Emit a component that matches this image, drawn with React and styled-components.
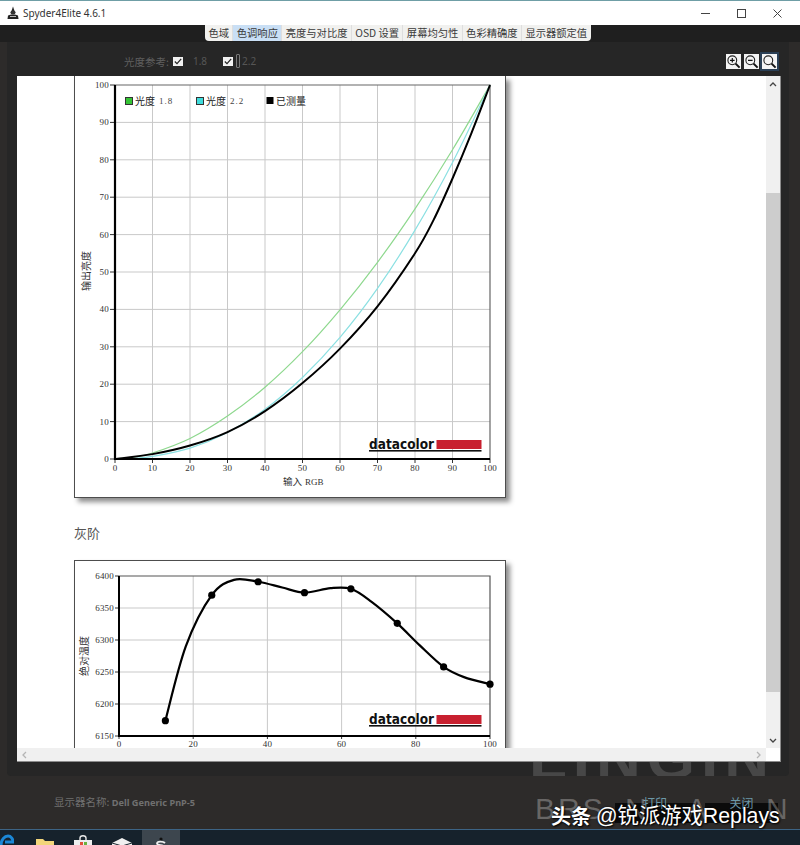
import styled, { createGlobalStyle } from 'styled-components';

const SANS = '"Noto Sans", "Noto Sans CJK SC", sans-serif';
const CJK = '"Noto Sans CJK SC", "Liberation Sans", sans-serif';
const TICK = '"Liberation Serif", "Noto Sans CJK SC", serif';

const TABS = ['色域', '色调响应', '亮度与对比度', 'OSD 设置', '屏幕均匀性', '色彩精确度', '显示器额定值'];

const GAMMA_18 = [[0, 0], [5, 0.5], [10, 1.6], [20, 5.5], [30, 11.5], [40, 19.2], [50, 28.7], [60, 39.9], [70, 52.6], [80, 66.9], [90, 82.7], [100, 100]];
const GAMMA_22 = [[0, 0], [5, 0.2], [10, 0.7], [20, 2.9], [30, 7.1], [40, 13.3], [50, 21.8], [60, 32.5], [70, 45.6], [80, 61.2], [90, 79.3], [100, 100]];
const MEASURED = [[0, 0], [10, 1.3], [20, 3.6], [30, 7.2], [40, 12.8], [50, 20.3], [60, 29.5], [70, 40.8], [80, 55], [85, 64], [90, 75], [95, 87], [100, 100]];

const GREY_DOTS = [[12.5, 6174], [25, 6370], [37.5, 6391], [50, 6374], [62.5, 6380], [75, 6326], [87.5, 6258], [100, 6231]];
const GREY_CURVE = [[12.5, 6174], [18, 6290], [25, 6370], [31, 6394], [37.5, 6391], [44, 6382], [50, 6374], [57, 6381], [62.5, 6380], [68, 6360], [75, 6326], [81, 6292], [87.5, 6258], [93, 6242], [100, 6231]];

// catmull-rom through the points, good enough for these curves
function smooth(pts) {
  let d = `M${pts[0][0]} ${pts[0][1]}`;
  for (let i = 0; i < pts.length - 1; i++) {
    const p0 = pts[i - 1] || pts[i];
    const p1 = pts[i];
    const p2 = pts[i + 1];
    const p3 = pts[i + 2] || p2;
    const c1x = p1[0] + (p2[0] - p0[0]) / 6;
    const c1y = p1[1] + (p2[1] - p0[1]) / 6;
    const c2x = p2[0] - (p3[0] - p1[0]) / 6;
    const c2y = p2[1] - (p3[1] - p1[1]) / 6;
    d += `C${c1x} ${c1y} ${c2x} ${c2y} ${p2[0]} ${p2[1]}`;
  }
  return d;
}

const GlobalStyle = createGlobalStyle`
  html, body {
    margin: 0;
    padding: 0;
    width: 800px;
    height: 845px;
    overflow: hidden;
    background: #2d2b2a;
  }
  * {
    box-sizing: border-box;
  }
`;

const Window = styled.div`
  position: relative;
  display: flex;
  flex-direction: column;
  width: 800px;
  height: 845px;
  overflow: hidden;
  font-family: ${SANS};
`;

const TitleBar = styled.div`
  display: flex;
  align-items: center;
  height: 25px;
  flex-shrink: 0;
  padding: 0 14px 0 7px;
  background: #fff;
  border-top: 1px solid #6f9ea6;
`;

const AppTitle = styled.span`
  margin-left: 4px;
  font-size: 10px;
  color: #333;
`;

const WindowButtons = styled.div`
  display: flex;
  align-items: center;
  gap: 27px;
  margin-left: auto;
  padding-right: 4px;
`;

const Main = styled.div`
  display: flex;
  flex-direction: column;
  flex: 1;
  min-height: 0;
  background: #2d2b2a;
`;

const TabStrip = styled.div`
  display: flex;
  height: 17px;
  flex-shrink: 0;
  padding-left: 205px;
  background: #1f1f1f;
`;

const TabGroup = styled.div`
  display: flex;
  height: 16px;
  background: #f1f1ef;
  border-radius: 0 0 4px 4px;
  overflow: hidden;
`;

const Tab = styled.div`
  display: flex;
  align-items: center;
  padding: 0 3.4px;
  font-family: ${CJK};
  font-size: 10.3px;
  line-height: 16px;
  color: #3a3a3a;
  white-space: nowrap;
  background: ${props => (props.$active ? '#c9dff5' : 'transparent')};
  border-right: 1px solid #dedede;

  &:last-child {
    border-right: 0;
  }
`;

const Panel = styled.div`
  position: relative;
  display: flex;
  flex-direction: column;
  height: 734px;
  flex-shrink: 0;
  margin: 0 11px 0 7px;
  padding: 0 8px 14px 10px;
  background: #262626;
  border-radius: 0 0 4px 4px;
  overflow: hidden;
`;

const OptionsRow = styled.div`
  display: flex;
  align-items: center;
  height: 34px;
  flex-shrink: 0;
  padding: 4px 4px 0 107px;
`;

const OptionLabel = styled.span`
  font-family: ${CJK};
  font-size: 10.5px;
  color: #5f5f5f;
  margin-right: 4px;
`;

const CheckBox = styled.span`
  display: flex;
  align-items: center;
  justify-content: center;
  width: 10px;
  height: 9px;
  background: #f0f0f0;
`;

const OptionValue = styled.span`
  font-size: 10px;
  color: #565656;
  margin-left: ${props => props.$gap}px;
  margin-right: ${props => props.$after}px;
`;

const FocusMark = styled.span`
  width: 4px;
  height: 14px;
  margin-left: 3px;
  border: 1px solid #777;
  border-radius: 1px;
`;

const ZoomGroup = styled.div`
  display: flex;
  align-items: center;
  gap: 3px;
  margin-left: auto;
`;

const ZoomButton = styled.span`
  display: flex;
  align-items: center;
  justify-content: center;
  width: 15px;
  height: 15px;
  background: #f4f4f4;
  outline: ${props => (props.$active ? '2px solid #2a3f55' : 'none')};
`;

const ScrollView = styled.div`
  position: relative;
  z-index: 1;
  display: grid;
  grid-template-columns: 1fr 14px;
  grid-template-rows: 1fr 13px;
  flex: 1;
  min-height: 0;
  background: #fff;
  border-right: 1px solid #8c8c8c;
  border-bottom: 1px solid #8c8c8c;
`;

const ScrollContent = styled.div`
  padding-left: 57px;
  overflow: hidden;
`;

const ChartFrame = styled.div`
  width: 432px;
  height: ${props => props.$height}px;
  background: #fff;
  border: 1px solid #4d4d4d;
  border-top-width: ${props => (props.$cut ? 0 : 1)}px;
  box-shadow: 4px 4px 5px rgba(0, 0, 0, 0.45);
`;

const ChartSvg = styled.svg`
  display: block;
  font-family: ${TICK};
`;

const SectionTitle = styled.div`
  height: 62px;
  padding-top: 25px;
  font-family: ${CJK};
  font-size: 13px;
  font-weight: 400;
  line-height: 20px;
  color: #555;
`;

const VScroll = styled.div`
  display: flex;
  flex-direction: column;
  background: #f0f0f0;
`;

const ScrollArrow = styled.div`
  display: flex;
  align-items: center;
  justify-content: center;
  height: ${props => props.$size}px;
  flex-shrink: 0;

  &:last-child {
    margin-top: auto;
  }
`;

const VThumb = styled.div`
  height: 499px;
  flex-shrink: 0;
  margin-top: 100px;
  background: #cdcdcd;
`;

const HScroll = styled.div`
  display: flex;
  align-items: center;
  justify-content: space-between;
  padding: 0 4px;
  background: #f0f0f0;
`;

const Corner = styled.div`
  background: #fff;
`;

const Footer = styled.div`
  position: relative;
  display: flex;
  align-items: flex-start;
  flex: 1;
  padding: 18px 22px 0 54px;
  background: #2d2b2a;
`;

const MonitorName = styled.div`
  font-family: ${CJK};
  font-size: 10.5px;
  color: #707070;

  b {
    font-family: ${SANS};
    font-size: 9.2px;
    font-weight: 700;
  }
`;

const BackdropTop = styled.div`
  position: absolute;
  right: 14px;
  bottom: -13px;
  font-family: "Liberation Sans", sans-serif;
  font-size: 62px;
  font-weight: 700;
  line-height: 62px;
  letter-spacing: 6px;
  white-space: nowrap;
  color: #474747;
`;

const BackdropBottom = styled.div`
  position: absolute;
  left: 535px;
  top: 18px;
  font-family: "Liberation Sans", sans-serif;
  font-size: 30px;
  line-height: 30px;
  letter-spacing: 3px;
  word-spacing: 8px;
  white-space: pre;
  color: rgba(255, 255, 255, 0.28);
`;

const ButtonRow = styled.div`
  position: relative;
  display: flex;
  gap: 10px;
  margin-left: auto;
  margin-top: 4px;
`;

const FooterButton = styled.div`
  width: ${props => props.$width}px;
  height: 25px;
  text-align: center;
  font-family: ${CJK};
  font-size: 12px;
  line-height: 10px;
  color: #6c98a8;
  background: linear-gradient(transparent 5px, #0b0b0b 5px);
`;

const Taskbar = styled.div`
  display: flex;
  align-items: flex-start;
  height: 16px;
  flex-shrink: 0;
  background: #16222c;
  border-top: 1px solid #3d6485;
  overflow: hidden;
`;

const TaskSlot = styled.div`
  display: flex;
  justify-content: center;
  width: ${props => props.$width}px;
  height: 16px;
  margin-left: ${props => props.$gap || 0}px;
  background: ${props => (props.$active ? '#3d464e' : 'transparent')};
`;

const Watermark = styled.div`
  position: absolute;
  left: 551px;
  top: 803px;
  display: flex;
  align-items: center;
  gap: 5px;
  font-family: "Liberation Sans", "Noto Sans CJK SC", sans-serif;
  font-size: 21.3px;
  line-height: 26px;
  white-space: nowrap;
  color: #fff;
  text-shadow: 1px 1px 2px #000, 0 0 2px rgba(0, 0, 0, 0.7);

  b {
    font-family: ${CJK};
    font-size: 20px;
    font-weight: 700;
  }
`;

function AppIcon() {
  return (
    <svg width="12" height="14" viewBox="0 0 12 14">
      <path d="M6 0.5 L7.5 5 L4.5 5Z" fill="#222" />
      <ellipse cx="6" cy="6.5" rx="2.6" ry="2" fill="#333" />
      <path d="M1 9.5 C3 8 9 8 11 9.5 L11.5 13 L0.5 13Z" fill="#222" />
      <path d="M3 10.5 H9" stroke="#bbb" strokeWidth="1" />
    </svg>
  );
}

function Minimize() {
  return (
    <svg width="9" height="9" viewBox="0 0 9 9">
      <path d="M0 4.5 H9" stroke="#444" strokeWidth="1" />
    </svg>
  );
}

function Maximize() {
  return (
    <svg width="9" height="9" viewBox="0 0 9 9">
      <rect x="0.5" y="0.5" width="8" height="8" fill="none" stroke="#444" strokeWidth="1" />
    </svg>
  );
}

function Close() {
  return (
    <svg width="9" height="9" viewBox="0 0 9 9">
      <path d="M0.5 0.5 L8.5 8.5 M8.5 0.5 L0.5 8.5" stroke="#444" strokeWidth="1" />
    </svg>
  );
}

function Check() {
  return (
    <svg width="8" height="7" viewBox="0 0 8 7">
      <path d="M0.8 3.5 L3 5.6 L7.2 0.8" fill="none" stroke="#222" strokeWidth="1.2" />
    </svg>
  );
}

function Magnifier({ kind }) {
  return (
    <svg width="15" height="15" viewBox="0 0 15 15">
      <circle cx="6.3" cy="6.3" r="4.4" fill="none" stroke="#222" strokeWidth="1.1" />
      <path d="M9.6 9.6 L13.6 13.6" stroke="#111" strokeWidth="2" />
      {kind !== 'fit' && <path d="M4 6.3 H8.6" stroke="#111" strokeWidth="1.2" />}
      {kind === 'in' && <path d="M6.3 4 V8.6" stroke="#111" strokeWidth="1.2" />}
    </svg>
  );
}

function Chevron({ dir }) {
  const paths = {
    up: 'M1 5 L4 2 L7 5',
    down: 'M1 2 L4 5 L7 2',
    left: 'M5 1 L2 4 L5 7',
    right: 'M3 1 L6 4 L3 7',
  };
  const colour = dir === 'up' || dir === 'down' ? '#444' : '#b5b5b5';
  return (
    <svg width="8" height="8" viewBox="0 0 8 8">
      <path d={paths[dir]} fill="none" stroke={colour} strokeWidth="1.3" />
    </svg>
  );
}

function Logo({ y }) {
  return (
    <g>
      <text
        x="369"
        y={y - 0.5}
        fontFamily='"DejaVu Sans", sans-serif'
        fontWeight="700"
        fontSize="14.5"
        textLength="65"
        lengthAdjust="spacingAndGlyphs"
        fill="#111"
      >
        datacolor
      </text>
      <rect x="436.5" y={y - 9} width="45" height="9" fill="#c8202f" />
      <rect x="369" y={y + 1} width="112.5" height="1.6" fill="#111" />
    </g>
  );
}

function ToneChart() {
  const px = v => 115 + v * 3.75;
  const py = v => 459 - v * 3.74;
  const toPlot = pts => pts.map(([a, b]) => [px(a), py(b)]);
  const steps = [0, 10, 20, 30, 40, 50, 60, 70, 80, 90, 100];
  return (
    <ChartSvg width="430" height="421" viewBox="75 76 430 421">
      {steps.slice(1, -1).map(v => (
        <g key={v} stroke="#c9c9c9" strokeWidth="1">
          <line x1={px(v)} y1="85" x2={px(v)} y2="459" />
          <line x1="115" y1={py(v)} x2="490" y2={py(v)} />
        </g>
      ))}
      <path d="M115 85 H490 V459" fill="none" stroke="#666" strokeWidth="1.2" />
      {steps.map(v => (
        <g key={v}>
          <line x1="110" y1={py(v)} x2="115" y2={py(v)} stroke="#333" />
          <line x1={px(v)} y1="459" x2={px(v)} y2="463" stroke="#333" />
          <text x="109" y={py(v) + 3} fontSize="9" letterSpacing="0.2" textAnchor="end" fill="#333">{v}</text>
          <text x={px(v)} y="471" fontSize="9" letterSpacing="0.2" textAnchor="middle" fill="#333">{v}</text>
        </g>
      ))}
      <path d={smooth(toPlot(GAMMA_18))} fill="none" stroke="#8ed88e" strokeWidth="1.2" />
      <path d={smooth(toPlot(GAMMA_22))} fill="none" stroke="#8be0e2" strokeWidth="1.2" />
      <path d={smooth(toPlot(MEASURED))} fill="none" stroke="#000" strokeWidth="2" />
      <path d="M115 85 V459 H490" fill="none" stroke="#000" strokeWidth="2.2" />

      <rect x="125.5" y="97.5" width="7" height="7" fill="#35c435" stroke="#333" />
      <text x="135" y="105" fontSize="10" fontFamily={CJK} fill="#222">光度</text>
      <text x="159" y="104" fontSize="9" letterSpacing="1" fill="#444">1.8</text>
      <rect x="196.5" y="97.5" width="7" height="7" fill="#3fdcdc" stroke="#333" />
      <text x="206" y="105" fontSize="10" fontFamily={CJK} fill="#222">光度</text>
      <text x="230" y="104" fontSize="9" letterSpacing="1" fill="#444">2.2</text>
      <rect x="266.5" y="97" width="7" height="7" fill="#000" />
      <text x="276" y="105" fontSize="10" fontFamily={CJK} fill="#222">已测量</text>

      <text x="283" y="485" fontSize="9.5" fontFamily={CJK} fill="#333">输入</text>
      <text x="305" y="485" fontSize="9" fill="#333">RGB</text>
      <text transform="translate(90 271) rotate(-90)" fontSize="10" fontFamily={CJK} textAnchor="middle" fill="#333">输出亮度</text>
      <Logo y={449} />
    </ChartSvg>
  );
}

function GreyChart() {
  const px = v => 119 + v * 3.71;
  const py = v => 576 + (6400 - v) * 0.64;
  const toPlot = pts => pts.map(([a, b]) => [px(a), py(b)]);
  const xs = [0, 20, 40, 60, 80, 100];
  const ys = [6400, 6350, 6300, 6250, 6200, 6150];
  return (
    <ChartSvg width="430" height="210" viewBox="75 561 430 210">
      {xs.slice(1, -1).map(v => (
        <line key={v} x1={px(v)} y1="576" x2={px(v)} y2="736" stroke="#c9c9c9" />
      ))}
      {ys.slice(1, -1).map(v => (
        <line key={v} x1="119" y1={py(v)} x2="490" y2={py(v)} stroke="#c9c9c9" />
      ))}
      <path d="M119 576 H490 V736" fill="none" stroke="#555" strokeWidth="1.2" />
      {ys.map(v => (
        <g key={v}>
          <line x1="115" y1={py(v)} x2="119" y2={py(v)} stroke="#333" />
          <text x="114" y={py(v) + 3} fontSize="9" letterSpacing="0.2" textAnchor="end" fill="#333">{v}</text>
        </g>
      ))}
      {xs.map(v => (
        <g key={v}>
          <line x1={px(v)} y1="736" x2={px(v)} y2="739" stroke="#333" />
          <text x={px(v)} y="747" fontSize="9" letterSpacing="0.2" textAnchor="middle" fill="#333">{v}</text>
        </g>
      ))}
      <path d={smooth(toPlot(GREY_CURVE))} fill="none" stroke="#000" strokeWidth="2.2" />
      {GREY_DOTS.map(([a, b]) => (
        <circle key={a} cx={px(a)} cy={py(b)} r="3.6" fill="#000" />
      ))}
      <path d="M119 576 V736 H490" fill="none" stroke="#000" strokeWidth="2" />
      <text transform="translate(88 656) rotate(-90)" fontSize="10" fontFamily={CJK} textAnchor="middle" fill="#333">绝对温度</text>
      <Logo y={724} />
    </ChartSvg>
  );
}

function TaskIcons() {
  return (
    <>
      <TaskSlot $width={14}>
        <svg width="14" height="16" viewBox="0 0 14 16">
          <path d="M1 16 C1 9 5 6 8 6 C11 6 13 9 13 12 H5" fill="none" stroke="#1b87d6" strokeWidth="3" />
        </svg>
      </TaskSlot>
      <TaskSlot $width={20} $gap={21}>
        <svg width="20" height="16" viewBox="0 0 20 16">
          <path d="M1 16 V9 H8 L10 11 H19 V16Z" fill="#f2d57a" />
        </svg>
      </TaskSlot>
      <TaskSlot $width={20} $gap={18}>
        <svg width="20" height="16" viewBox="0 0 20 16">
          <path d="M7 10 V8 C7 5 13 5 13 8 V10" fill="none" stroke="#e8e8e8" strokeWidth="1.4" />
          <rect x="1" y="10" width="18" height="6" fill="#eee" />
          <rect x="7" y="12" width="3" height="3" fill="#e0503a" />
          <rect x="11" y="12" width="3" height="3" fill="#6cb33f" />
        </svg>
      </TaskSlot>
      <TaskSlot $width={20} $gap={19}>
        <svg width="20" height="16" viewBox="0 0 20 16">
          <path d="M0 16 V13 L10 8 L20 13 V16Z" fill="#f0f0f0" />
          <path d="M0 13 L10 16" stroke="#16222c" strokeWidth="1" />
          <path d="M20 13 L10 16" stroke="#16222c" strokeWidth="1" />
        </svg>
      </TaskSlot>
      <TaskSlot $width={38} $gap={10} $active>
        <svg width="14" height="16" viewBox="0 0 14 16">
          <circle cx="7" cy="9" r="1.6" fill="#111" />
          <path d="M11 13 C9 11 3 11 3 13.5 C3 16 10 14 10 17" fill="none" stroke="#f0f0f0" strokeWidth="1.8" />
        </svg>
      </TaskSlot>
    </>
  );
}

export default function App() {
  return (
    <>
      <GlobalStyle />
      <Window>
        <TitleBar>
          <AppIcon />
          <AppTitle>Spyder4Elite 4.6.1</AppTitle>
          <WindowButtons>
            <Minimize />
            <Maximize />
            <Close />
          </WindowButtons>
        </TitleBar>
        <Main>
          <TabStrip>
            <TabGroup>
              {TABS.map((name, i) => (
                <Tab key={name} $active={i === 1}>{name}</Tab>
              ))}
            </TabGroup>
          </TabStrip>
          <Panel>
            <BackdropTop>LINGIN</BackdropTop>
            <OptionsRow>
              <OptionLabel>光度参考:</OptionLabel>
              <CheckBox><Check /></CheckBox>
              <OptionValue $gap={10} $after={16}>1.8</OptionValue>
              <CheckBox><Check /></CheckBox>
              <FocusMark />
              <OptionValue $gap={2} $after={0}>2.2</OptionValue>
              <ZoomGroup>
                <ZoomButton><Magnifier kind="in" /></ZoomButton>
                <ZoomButton><Magnifier kind="out" /></ZoomButton>
                <ZoomButton $active><Magnifier kind="fit" /></ZoomButton>
              </ZoomGroup>
            </OptionsRow>
            <ScrollView>
              <ScrollContent>
                <ChartFrame $cut $height={422}>
                  <ToneChart />
                </ChartFrame>
                <SectionTitle>灰阶</SectionTitle>
                <ChartFrame $height={240}>
                  <GreyChart />
                </ChartFrame>
              </ScrollContent>
              <VScroll>
                <ScrollArrow $size={17}><Chevron dir="up" /></ScrollArrow>
                <VThumb />
                <ScrollArrow $size={14}><Chevron dir="down" /></ScrollArrow>
              </VScroll>
              <HScroll>
                <Chevron dir="left" />
                <Chevron dir="right" />
              </HScroll>
              <Corner />
            </ScrollView>
          </Panel>
          <Footer>
            <MonitorName>显示器名称: <b>Dell Generic PnP-5</b></MonitorName>
            <ButtonRow>
              <FooterButton $width={80}>打印</FooterButton>
              <FooterButton $width={73}>关闭</FooterButton>
            </ButtonRow>
            <BackdropBottom>{'BRS N  A   N'}</BackdropBottom>
          </Footer>
        </Main>
        <Taskbar>
          <TaskIcons />
        </Taskbar>
        <Watermark>
          <b>头条</b>
          <span>@锐派游戏Replays</span>
        </Watermark>
      </Window>
    </>
  );
}
